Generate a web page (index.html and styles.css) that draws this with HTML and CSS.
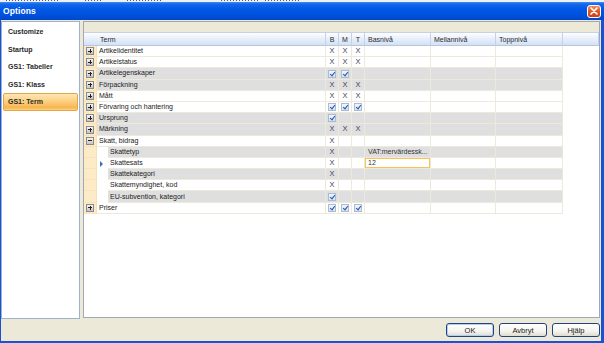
FILE: index.html
```html
<!DOCTYPE html>
<html>
<head>
    <title>Options</title>
    <meta charset="UTF-8">
    <link rel="stylesheet" href="styles.css">
</head>
<body>
<div class="backdrop">
    <span class="frag f1"></span>
    <span class="frag f2"></span>
    <span class="frag f3"></span>
    <span class="frag f4"></span>
    <span class="frag f5"></span>
</div>

<div class="window">
    <div class="titlebar">
        <span class="title">Options</span>
        <span class="close">
            <svg width="8" height="8" viewBox="0 0 8 8"><path d="M1 1 L7 7 M7 1 L1 7" stroke="#fff" stroke-width="1.6" stroke-linecap="round"/></svg>
        </span>
    </div>

    <div class="frame">
        <div class="main">
            <ul class="nav">
                <li>Customize</li>
                <li>Startup</li>
                <li>GS1: Tabeller</li>
                <li>GS1: Klass</li>
                <li class="active">GS1: Term</li>
            </ul>

            <div class="gridpanel">
                <div class="groupbar"></div>
                <table class="grid">
                    <colgroup>
                        <col class="c-exp"><col class="c-ind"><col class="c-name">
                        <col class="c-f"><col class="c-f"><col class="c-f">
                        <col class="c-bas"><col class="c-mel"><col class="c-top"><col>
                    </colgroup>
                    <tr class="head">
                        <th></th>
                        <th colspan="2">Term</th>
                        <th class="mid">B</th>
                        <th class="mid">M</th>
                        <th class="mid">T</th>
                        <th>Basnivå</th>
                        <th>Mellannivå</th>
                        <th>Toppnivå</th>
                        <th class="fill"></th>
                    </tr>
                    <tr class="w">
                        <td class="exp"><span class="pm"></span></td>
                        <td class="name" colspan="2">Artikelidentitet</td>
                        <td class="f"><span class="x">X</span></td><td class="f"><span class="x">X</span></td><td class="f"><span class="x">X</span></td>
                        <td class="lv"></td><td class="lv"></td><td class="lv"></td><td class="rest"></td>
                    </tr>
                    <tr class="w">
                        <td class="exp"><span class="pm"></span></td>
                        <td class="name" colspan="2">Artikelstatus</td>
                        <td class="f"><span class="x">X</span></td><td class="f"><span class="x">X</span></td><td class="f"><span class="x">X</span></td>
                        <td class="lv"></td><td class="lv"></td><td class="lv"></td><td class="rest"></td>
                    </tr>
                    <tr class="g">
                        <td class="exp"><span class="pm"></span></td>
                        <td class="name" colspan="2">Artikelegenskaper</td>
                        <td class="f"><span class="ck"></span></td><td class="f"><span class="ck"></span></td><td class="f"></td>
                        <td class="lv"></td><td class="lv"></td><td class="lv"></td><td class="rest"></td>
                    </tr>
                    <tr class="g">
                        <td class="exp"><span class="pm"></span></td>
                        <td class="name" colspan="2">Förpackning</td>
                        <td class="f"><span class="x">X</span></td><td class="f"><span class="x">X</span></td><td class="f"><span class="x">X</span></td>
                        <td class="lv"></td><td class="lv"></td><td class="lv"></td><td class="rest"></td>
                    </tr>
                    <tr class="w">
                        <td class="exp"><span class="pm"></span></td>
                        <td class="name" colspan="2">Mått</td>
                        <td class="f"><span class="x">X</span></td><td class="f"><span class="x">X</span></td><td class="f"><span class="x">X</span></td>
                        <td class="lv"></td><td class="lv"></td><td class="lv"></td><td class="rest"></td>
                    </tr>
                    <tr class="w">
                        <td class="exp"><span class="pm"></span></td>
                        <td class="name" colspan="2">Förvaring och hantering</td>
                        <td class="f"><span class="ck"></span></td><td class="f"><span class="ck"></span></td><td class="f"><span class="ck"></span></td>
                        <td class="lv"></td><td class="lv"></td><td class="lv"></td><td class="rest"></td>
                    </tr>
                    <tr class="g">
                        <td class="exp"><span class="pm"></span></td>
                        <td class="name" colspan="2">Ursprung</td>
                        <td class="f"><span class="ck"></span></td><td class="f"></td><td class="f"></td>
                        <td class="lv"></td><td class="lv"></td><td class="lv"></td><td class="rest"></td>
                    </tr>
                    <tr class="g">
                        <td class="exp"><span class="pm"></span></td>
                        <td class="name" colspan="2">Märkning</td>
                        <td class="f"><span class="x">X</span></td><td class="f"><span class="x">X</span></td><td class="f"><span class="x">X</span></td>
                        <td class="lv"></td><td class="lv"></td><td class="lv"></td><td class="rest"></td>
                    </tr>
                    <tr class="w">
                        <td class="exp"><span class="pm open"></span></td>
                        <td class="name" colspan="2">Skatt, bidrag</td>
                        <td class="f"><span class="x">X</span></td><td class="f"></td><td class="f"></td>
                        <td class="lv"></td><td class="lv"></td><td class="lv"></td><td class="rest"></td>
                    </tr>
                    <tr class="g">
                        <td class="exp"></td><td class="ind"></td>
                        <td class="name">Skattetyp</td>
                        <td class="f"><span class="x">X</span></td><td class="f"></td><td class="f"></td>
                        <td class="lv">VAT:mervärdessk...</td><td class="lv"></td><td class="lv"></td><td class="rest"></td>
                    </tr>
                    <tr class="w">
                        <td class="exp"></td><td class="ind"><span class="cur"></span></td>
                        <td class="name">Skattesats</td>
                        <td class="f"><span class="x">X</span></td><td class="f"></td><td class="f"></td>
                        <td class="lv edit">12</td><td class="lv"></td><td class="lv"></td><td class="rest"></td>
                    </tr>
                    <tr class="g">
                        <td class="exp"></td><td class="ind"></td>
                        <td class="name">Skattekategori</td>
                        <td class="f"><span class="x">X</span></td><td class="f"></td><td class="f"></td>
                        <td class="lv"></td><td class="lv"></td><td class="lv"></td><td class="rest"></td>
                    </tr>
                    <tr class="w">
                        <td class="exp"></td><td class="ind"></td>
                        <td class="name">Skattemyndighet, kod</td>
                        <td class="f"><span class="x">X</span></td><td class="f"></td><td class="f"></td>
                        <td class="lv"></td><td class="lv"></td><td class="lv"></td><td class="rest"></td>
                    </tr>
                    <tr class="g">
                        <td class="exp"></td><td class="ind"></td>
                        <td class="name">EU-subvention, kategori</td>
                        <td class="f"><span class="ck"></span></td><td class="f"></td><td class="f"></td>
                        <td class="lv"></td><td class="lv"></td><td class="lv"></td><td class="rest"></td>
                    </tr>
                    <tr class="w">
                        <td class="exp"><span class="pm"></span></td>
                        <td class="name" colspan="2">Priser</td>
                        <td class="f"><span class="ck"></span></td><td class="f"><span class="ck"></span></td><td class="f"><span class="ck"></span></td>
                        <td class="lv"></td><td class="lv"></td><td class="lv"></td><td class="rest"></td>
                    </tr>
                </table>
            </div>
        </div>

        <div class="buttons">
            <div class="btn def">OK</div>
            <div class="btn">Avbryt</div>
            <div class="btn">Hjälp</div>
        </div>
    </div>
</div>
</body>
</html>
```

FILE: styles.css
```css
* {
    box-sizing: border-box;
}

html, body {
    margin: 0;
    padding: 0;
}

body {
    width: 604px;
    height: 343px;
    overflow: hidden;
    background: #ece9d8;
    font-family: "Liberation Sans", Arial, sans-serif;
    color: #1a1a1a;
}

/* strip of the application behind the dialog */
.backdrop {
    height: 2px;
    display: flex;
    align-items: flex-start;
    padding-left: 6px;
    background: #eef0f5;
}

.frag {
    height: 1px;
    background: repeating-linear-gradient(90deg, #5a5d6e 0 1px, transparent 1px 3px);
}

.f1 { width: 52px; }
.f2 { width: 17px; margin-left: 27px; }
.f3 { width: 34px; margin-left: 25px; }
.f4 { width: 37px; margin-left: 60px; }
.f5 { width: 35px; margin-left: 7px; }

/* title bar */
.titlebar {
    height: 18px;
    display: flex;
    align-items: center;
    justify-content: space-between;
    padding: 0 3px 0 3px;
    background: linear-gradient(#3f8ef6 0, #1467ea 2px, #0058e6 40%, #0052de 70%, #0046c9 100%);
    color: white;
}

.title {
    font-weight: bold;
    font-size: 8.5px;
    letter-spacing: 0.1px;
}

.close {
    width: 14px;
    height: 13px;
    display: flex;
    align-items: center;
    justify-content: center;
    border: 1px solid #fff;
    border-radius: 3px;
    background: linear-gradient(#ef8a5e, #e0582a 50%, #c9401a);
}

.frame {
    height: 323px;
    border: solid #1a52d6;
    border-width: 0 3px 2px 1px;
}

.main {
    display: flex;
    gap: 3px;
    height: 299px;
    padding: 1px 1px 0 0;
}

/* left navigation */
.nav {
    width: 79px;
    margin: 0;
    padding: 1px 1px 0 1px;
    list-style: none;
    background: white;
    border: 1px solid #9db2cd;
}

.nav li {
    height: 17.5px;
    line-height: 15.5px;
    padding-left: 4px;
    font-size: 7px;
    font-weight: bold;
    color: #2a2a2a;
    border: 1px solid transparent;
    border-radius: 2px;
}

.nav li.active {
    border-color: #e3a540;
    background: linear-gradient(#fde7b6, #fccf82 45%, #f8b64c 85%, #fbd392);
}

/* grid */
.gridpanel {
    flex: 1;
    height: 297px;
    background: white;
    border: 1px solid #9ea8b8;
    display: flex;
    flex-direction: column;
}

.groupbar {
    height: 11px;
    background: #ece9d8;
    border-bottom: 1px solid #c6d2e4;
}

.grid {
    width: 100%;
    table-layout: fixed;
    border-collapse: separate;
    border-spacing: 0;
    font-size: 7px;
}

.c-exp { width: 13px; }
.c-ind { width: 11px; }
.c-name { width: 218px; }
.c-f { width: 13px; }
.c-bas { width: 66px; }
.c-mel { width: 65px; }
.c-top { width: 67px; }

.grid th {
    height: 13px;
    padding: 0 0 0 3px;
    font-weight: normal;
    text-align: left;
    color: #2a2a2a;
    white-space: nowrap;
    background: linear-gradient(#fdfeff, #e9f0fb 45%, #d4e1f6);
    border-bottom: 1px solid #b6c7e0;
    border-right: 1px solid #c3d2e8;
}

.grid th:first-child {
    border-right: none;
}

.grid th.mid {
    padding: 0;
    text-align: center;
}

.grid td {
    height: 11.2px;
    padding: 0;
    line-height: 10px;
    white-space: nowrap;
    overflow: hidden;
    border-bottom: 1px solid #ede9dc;
}

.grid td.exp {
    text-align: center;
    background: #fdebc8;
    border-bottom-color: #f8e3ba;
    border-right: 1px solid #f6e0b4;
}

.grid td.ind {
    border-bottom: none;
    background: white;
    padding-left: 3px;
}

.grid td.name {
    padding-left: 2px;
    border-right: 1px solid #ede9dc;
}

.grid td.f {
    text-align: center;
    border-right: 1px solid #ede9dc;
}

.grid td.lv {
    padding-left: 3px;
    border-right: 1px solid #ede9dc;
    color: #333;
}

.grid td.rest {
    border-bottom: none;
}

.grid tr.g td.name,
.grid tr.g td.f,
.grid tr.g td.lv {
    background: #dfdfdf;
    border-right-color: #ebe8de;
}

.grid td.edit {
    background: white;
    box-shadow: inset 0 0 0 1px #f6c455;
}

.x {
    color: #44425a;
    font-size: 7.5px;
}

/* checkbox mark */
.ck {
    display: inline-block;
    position: relative;
    width: 8px;
    height: 8px;
    vertical-align: middle;
    border: 1px solid #a9bbd6;
    background: linear-gradient(#f2f6fc, #d6e2f2);
}

.ck::after {
    content: "";
    position: absolute;
    left: 2px;
    top: 0;
    width: 2px;
    height: 4px;
    border: solid #2f5aa3;
    border-width: 0 1.5px 1.5px 0;
    transform: rotate(38deg);
}

/* expand / collapse box */
.pm {
    display: inline-block;
    position: relative;
    width: 8px;
    height: 8px;
    vertical-align: middle;
    border: 1px solid #8a8a8a;
    background: linear-gradient(#f6f6f6, #c4c4c4);
}

.pm::before {
    content: "";
    position: absolute;
    left: 1px;
    top: 2.5px;
    width: 4px;
    height: 1px;
    background: #222;
}

.pm::after {
    content: "";
    position: absolute;
    left: 2.5px;
    top: 1px;
    width: 1px;
    height: 4px;
    background: #222;
}

.pm.open::after {
    display: none;
}

/* current row arrow */
.cur {
    display: inline-block;
    vertical-align: middle;
    border-left: 3px solid #3a6cc0;
    border-top: 3px solid transparent;
    border-bottom: 3px solid transparent;
}

/* dialog buttons */
.buttons {
    display: flex;
    justify-content: flex-end;
    gap: 5px;
    margin-top: 4px;
    padding-right: 1px;
}

.btn {
    width: 48px;
    height: 14px;
    display: flex;
    align-items: center;
    justify-content: center;
    font-size: 7.5px;
    color: #1a1a1a;
    border: 1px solid #22447e;
    border-radius: 3px;
    background: linear-gradient(#ffffff, #f5f4ef 60%, #dedbd0);
}

.btn.def {
    box-shadow: inset 0 0 0 1px #b4cbf2;
}
```
